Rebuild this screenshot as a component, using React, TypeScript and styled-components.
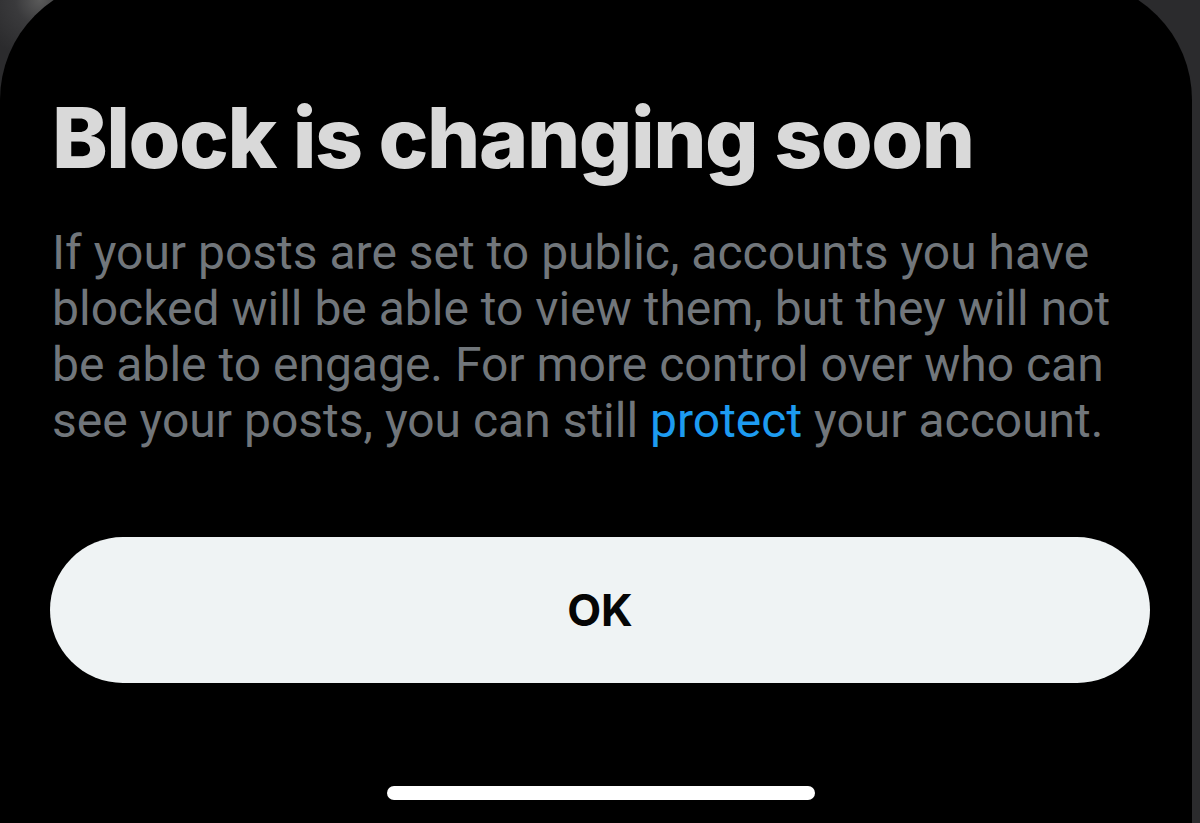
import React from "react";
import styled, { createGlobalStyle } from "styled-components";

const Global = createGlobalStyle`
  html, body { margin: 0; padding: 0; background: #2b2b2d; overflow: hidden; }
  #root { width: 1200px; height: 823px; }
`;

const Screen = styled.div`
  width: 1200px;
  height: 823px;
  background: radial-gradient(circle at 40px 0px, #5a5a5a 0px, #3a3a3c 25px, #2b2b2d 60px),
    #2b2b2d;
  overflow: hidden;
`;

const Sheet = styled.div`
  box-sizing: border-box;
  margin-top: -20px;
  width: 1192px;
  height: 843px;
  background: #000;
  border-radius: 120px 120px 0 0;
  padding: 108px 30px 0 52px;
  display: flex;
  flex-direction: column;
`;

const Title = styled.h1`
  margin: 0;
  font-family: "Inter", "Liberation Sans", sans-serif;
  font-weight: 800;
  font-size: 84px;
  line-height: 100px;
  letter-spacing: -1.5px;
  color: #d9d9d9;
`;

const Body = styled.p`
  margin: 37px 0 0 0;
  font-family: "Roboto", "Liberation Sans", sans-serif;
  font-weight: 400;
  font-size: 48px;
  line-height: 56px;
  color: #71767b;
  white-space: nowrap;
`;

const Link = styled.span`
  color: #1d9bf0;
`;

const Button = styled.button`
  margin: 88px 0 0 -2px;
  width: 1100px;
  height: 146px;
  border: none;
  border-radius: 73px;
  background: #eff3f4;
  font-family: "Inter", "Liberation Sans", sans-serif;
  font-weight: 700;
  font-size: 44px;
  color: #050505;
  display: flex;
  align-items: center;
  justify-content: center;
`;

const HomeBar = styled.div`
  align-self: flex-start;
  margin: 103px 0 0 335px;
  width: 428px;
  height: 14px;
  border-radius: 7px;
  background: #fff;
`;

export default function App() {
  return (
    <Screen>
      <Global />
      <Sheet>
        <Title>Block is changing soon</Title>
        <Body>
          If your posts are set to public, accounts you have
          <br />
          blocked will be able to view them, but they will not
          <br />
          be able to engage. For more control over who can
          <br />
          see your posts, you can still <Link>protect</Link> your account.
        </Body>
        <Button>OK</Button>
        <HomeBar />
      </Sheet>
    </Screen>
  );
}
